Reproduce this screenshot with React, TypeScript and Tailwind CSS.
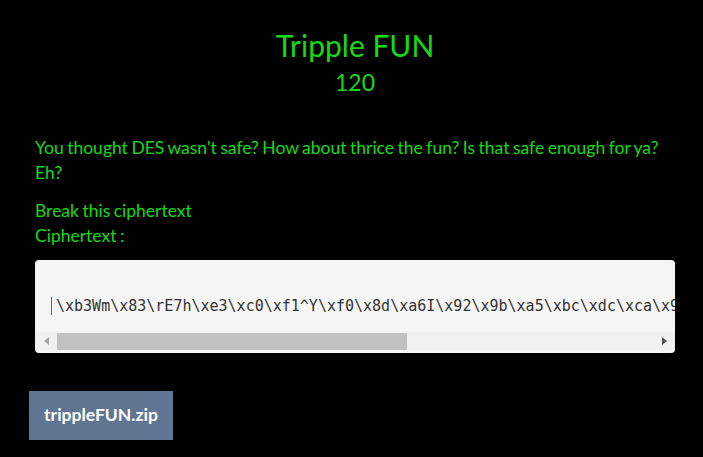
const cipher =
  "\\xb3Wm\\x83\\rE7h\\xe3\\xc0\\xf1^Y\\xf0\\x8d\\xa6I\\x92\\x9b\\xa5\\xbc\\xdc\\xca\\x9f\\x1c\\xd4";

const ScrollBar = () => (
  <div className="flex h-[18px] items-center bg-[#f1f1f1]">
    <div className="flex w-[22px] justify-center">
      <svg width="5" height="8" viewBox="0 0 5 8">
        <path d="M5 0 L0 4 L5 8 Z" fill="#a3a3a3" />
      </svg>
    </div>
    <div className="h-[17px] w-[350px] bg-[#c1c1c1]"></div>
    <div className="flex-1"></div>
    <div className="flex w-[22px] justify-center">
      <svg width="5" height="8" viewBox="0 0 5 8">
        <path d="M0 0 L5 4 L0 8 Z" fill="#505050" />
      </svg>
    </div>
  </div>
);

export default function App() {
  return (
    <div className="min-h-[457px] bg-black font-['Lato',sans-serif] text-[#16d916]">
      <div className="w-[640px] ml-[35px] pt-[25px]">
        <h1 className="text-center text-[30px] leading-[40px]">Tripple FUN</h1>
        <h2 className="text-center text-[23px] leading-[30px] mt-[2px]">120</h2>

        <p className="mt-[38px] text-[17.5px] leading-[25px] [word-spacing:-1px]">
          You thought DES wasn't safe? How about thrice the fun? Is that safe enough for ya? Eh?
        </p>
        <p className="mt-[13px] text-[17.5px] leading-[25px] [word-spacing:-1px]">
          Break this ciphertext
          <br />
          Ciphertext :
        </p>

        <div className="mt-[12px] overflow-hidden rounded-[4px] bg-[#f5f5f5]">
          <div className="h-[72px] pt-[36px] pl-[16px] whitespace-nowrap overflow-hidden font-['DejaVu_Sans_Mono',monospace] text-[15px] leading-[20px] text-[#333]">
            <span className="border-l border-[#a0523f] pl-[4px]">{cipher}</span>
          </div>
          <ScrollBar />
          <div className="h-[3px]"></div>
        </div>
      </div>

      <div className="ml-[29px] mt-[38px] inline-flex h-[49px] w-[144px] items-center justify-center bg-[#5f7592] text-[17.5px] font-bold text-white">
        trippleFUN.zip
      </div>
    </div>
  );
}
